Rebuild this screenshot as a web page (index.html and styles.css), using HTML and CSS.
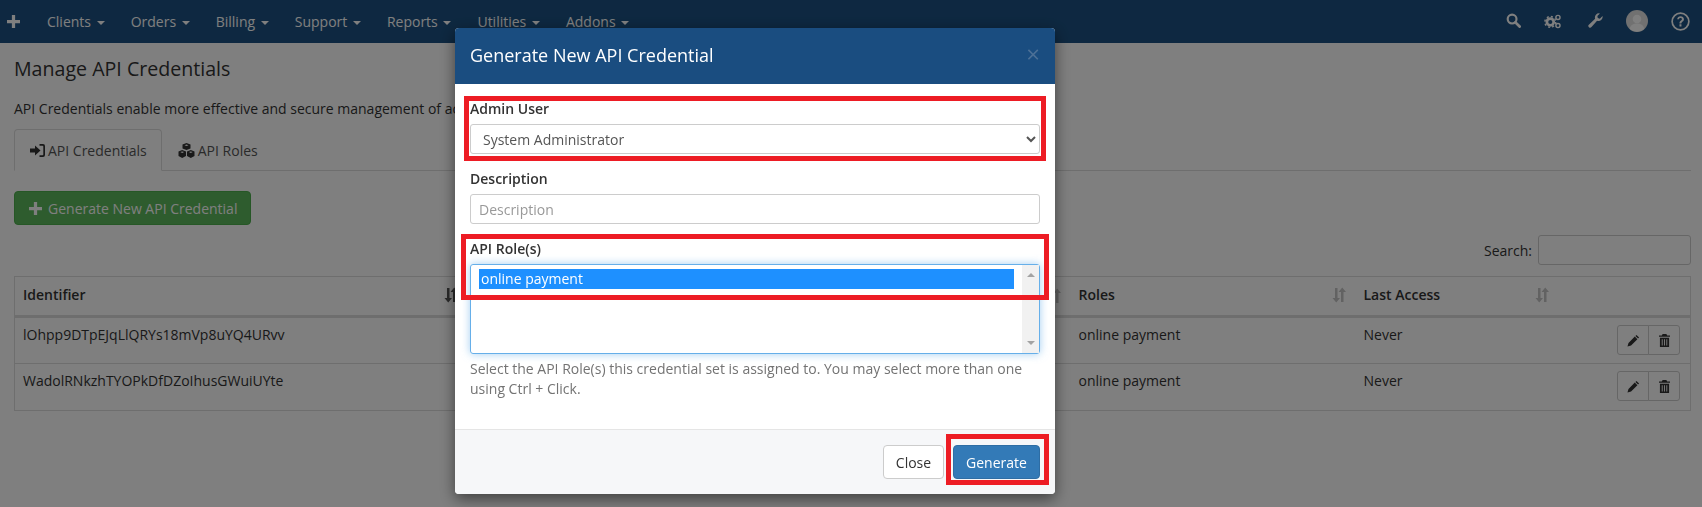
FILE: index.html
```html
<!DOCTYPE html>
<html lang="en">

<head>
    <meta charset="UTF-8">
    <title>Manage API Credentials</title>
    <link rel="stylesheet" href="styles.css">
</head>

<body>

    <svg class="icon-defs" width="0" height="0">
        <symbol id="i-plus" viewBox="0 0 12 12"><path d="M4.500 0h3v4.500H12v3H7.500V12h-3V7.500H0v-3h4.500z"/></symbol>
        <symbol id="i-sort" viewBox="0 0 16 16"><path d="M5 1h2.500v10H10l-3.750 4.500L2.500 11H5zM11 15h2.500V5H16L12.250.5 8.500 5H11z"/></symbol>
        <symbol id="i-pencil" viewBox="0 0 14 14"><path d="M10.200 1 13 3.800 11.900 4.900 9.100 2.100zM8.400 2.800l2.800 2.800-6.800 6.800-3.900 1.100 1.100-3.900z"/></symbol>
        <symbol id="i-trash" viewBox="0 0 12 14"><path d="M4 0h4l1 1.500h3V3H0V1.500h3zM1 4h10v10H1zm2 1.500v7h1v-7zm2.500 0v7h1v-7zm2.500 0v7h1v-7z" fill-rule="evenodd"/></symbol>
    </svg>

    <nav class="topnav">
        <svg class="nav-plus"><use href="#i-plus"/></svg>
        <ul class="nav-menu">
            <li>Clients <span class="caret"></span></li>
            <li>Orders <span class="caret"></span></li>
            <li>Billing <span class="caret"></span></li>
            <li>Support <span class="caret"></span></li>
            <li>Reports <span class="caret"></span></li>
            <li>Utilities <span class="caret"></span></li>
            <li>Addons <span class="caret"></span></li>
        </ul>
        <div class="nav-icons">
            <svg class="nav-search" width="15" height="15" viewBox="0 0 16 16"><circle cx="6.500" cy="6.500" r="4.700" fill="none" stroke="currentColor" stroke-width="2.300"/><path d="M10 10l4.500 4.500" stroke="currentColor" stroke-width="3" stroke-linecap="round"/></svg>
            <svg width="18" height="15" viewBox="0 0 20 16"><circle cx="7" cy="8.500" r="3.800" fill="none" stroke="currentColor" stroke-width="3"/><circle cx="7" cy="8.500" r="6" fill="none" stroke="currentColor" stroke-width="1.600" stroke-dasharray="2.300 2.400"/><circle cx="15.500" cy="3.500" r="2.300" fill="none" stroke="currentColor" stroke-width="1.600"/><circle cx="15.500" cy="12.500" r="2.300" fill="none" stroke="currentColor" stroke-width="1.600"/></svg>
            <svg class="nav-wrench" width="15" height="15" viewBox="0 0 16 16"><path d="M15.500 3.300a4.400 4.400 0 0 1-5.800 5L3.700 15a1.900 1.900 0 0 1-2.800-2.600l6.700-6.200a4.400 4.400 0 0 1 5.100-5.700L10 3.300l.4 2.100 2.200.6z"/></svg>
            <svg class="nav-avatar" width="22" height="22" viewBox="0 0 22 22"><circle cx="11" cy="11" r="11" fill="#e2e2e2"/><circle cx="11" cy="9" r="4.300" fill="#fff"/><path d="M3.800 19c.6-3.800 3.500-5.400 7.200-5.400s6.600 1.600 7.200 5.400a11 11 0 0 1-14.400 0z" fill="#fff"/></svg>
            <svg width="19" height="19" viewBox="0 0 20 20"><circle cx="10" cy="10" r="8.800" fill="none" stroke="currentColor" stroke-width="1.800"/><path d="M6.500 7.600C6.700 5.500 8.200 4.500 10 4.500c2 0 3.600 1.100 3.600 3 0 2.500-2.700 2.500-2.700 4.500H8.900c0-3.100 2.600-3.100 2.600-4.500 0-.8-.7-1.200-1.500-1.200-.9 0-1.500.5-1.600 1.400zM8.900 13H11v2.200H8.900z"/></svg>
        </div>
    </nav>

    <main class="content">
        <h1 class="page-title">Manage API Credentials</h1>
        <p class="page-intro">API Credentials enable more effective and secure management of access to the API.</p>

        <ul class="tabs">
            <li class="tab tab-active">
                <svg width="15" height="13" viewBox="0 0 15 13"><path d="M0 4.500h5V1.500L10.500 6.500 5 11.500v-3H0z"/><path d="M9.500 0H13a2 2 0 0 1 2 2v9a2 2 0 0 1-2 2H9.500v-1.800H12.500a.8.8 0 0 0 .8-.8V2.600a.8.8 0 0 0-.8-.8H9.500z"/></svg>
                API Credentials
            </li>
            <li class="tab">
                <svg width="17" height="15" viewBox="0 0 17 15"><path d="M8.500 0 12.500 1.600V5.400L8.500 7 4.500 5.400V1.600zM8.500 1.500 6.500 2.300 8.500 3.100 10.500 2.300zM4.200 7 8 8.500V13L4.200 15 .5 13V8.500zM4.200 8.400 2.300 9.100 4.200 9.900 6.100 9.100zM12.800 7 16.500 8.500V13L12.800 15 9 13V8.500zM12.800 8.400 10.900 9.100 12.800 9.900 14.700 9.100z" fill-rule="evenodd"/></svg>
                API Roles
            </li>
        </ul>

        <button type="button" class="btn-new">
            <svg width="13" height="13"><use href="#i-plus"/></svg>
            Generate New API Credential
        </button>

        <div class="search-row">
            <label for="table-search">Search:</label>
            <input type="text" id="table-search">
        </div>

        <table class="cred-table">
            <thead>
                <tr>
                    <th class="col-id">Identifier <svg class="sort"><use href="#i-sort"/></svg></th>
                    <th class="col-desc"><svg class="sort"><use href="#i-sort"/></svg></th>
                    <th class="col-admin"><svg class="sort"><use href="#i-sort"/></svg></th>
                    <th class="col-roles">Roles <svg class="sort"><use href="#i-sort"/></svg></th>
                    <th class="col-last">Last Access <svg class="sort"><use href="#i-sort"/></svg></th>
                    <th class="col-actions"></th>
                </tr>
            </thead>
            <tbody>
                <tr>
                    <td>lOhpp9DTpEJqLlQRYs18mVp8uYQ4URvv</td>
                    <td></td>
                    <td></td>
                    <td>online payment</td>
                    <td>Never</td>
                    <td class="cell-actions">
                        <div class="btn-group">
                            <button type="button"><svg width="13" height="13"><use href="#i-pencil"/></svg></button>
                            <button type="button"><svg width="11" height="13"><use href="#i-trash"/></svg></button>
                        </div>
                    </td>
                </tr>
                <tr>
                    <td>WadolRNkzhTYOPkDfDZoIhusGWuiUYte</td>
                    <td></td>
                    <td></td>
                    <td>online payment</td>
                    <td>Never</td>
                    <td class="cell-actions">
                        <div class="btn-group">
                            <button type="button"><svg width="13" height="13"><use href="#i-pencil"/></svg></button>
                            <button type="button"><svg width="11" height="13"><use href="#i-trash"/></svg></button>
                        </div>
                    </td>
                </tr>
            </tbody>
        </table>
    </main>

    <div class="backdrop">
        <div class="modal">
            <div class="modal-header">
                <h2>Generate New API Credential</h2>
                <span class="modal-close">&times;</span>
            </div>
            <form class="modal-body">
                <div class="form-group">
                    <label for="admin-user">Admin User</label>
                    <select id="admin-user">
                        <option>System Administrator</option>
                    </select>
                </div>
                <div class="form-group">
                    <label for="description">Description</label>
                    <input type="text" id="description" placeholder="Description">
                </div>
                <div class="form-group">
                    <label>API Role(s)</label>
                    <div class="role-list">
                        <div class="role-options">
                            <div class="role-option">online payment</div>
                        </div>
                        <div class="role-scroll">
                            <span class="arrow-up"></span>
                            <span class="arrow-down"></span>
                        </div>
                    </div>
                    <p class="help-text">Select the API Role(s) this credential set is assigned to. You may select more than one using Ctrl + Click.</p>
                </div>
            </form>
            <div class="modal-footer">
                <button type="button" class="btn-close">Close</button>
                <button type="button" class="btn-generate">Generate</button>
            </div>

            <div class="mark mark-admin"></div>
            <div class="mark mark-roles"></div>
            <div class="mark mark-generate"></div>
        </div>
    </div>

</body>

</html>
```

FILE: styles.css
```css
* {
    box-sizing: border-box;
}

html, body {
    height: 100%;
}

body {
    margin: 0;
    overflow: hidden;
    font-family: "Open Sans", sans-serif;
    font-size: 14px;
    color: #333;
    background-color: #fff;
}

svg {
    fill: currentColor;
}

.icon-defs {
    display: none;
}

.topnav {
    display: flex;
    align-items: center;
    height: 43px;
    background-color: #1c5182;
    color: #fff;
}

.nav-plus {
    width: 13px;
    height: 13px;
    margin-left: 7px;
}

.nav-menu {
    display: flex;
    margin: 0 0 0 27px;
    padding: 0;
    list-style: none;
}

.nav-menu li {
    margin-right: 26px;
}

.caret {
    display: inline-block;
    margin-left: 2px;
    vertical-align: middle;
    border-top: 4px solid #fff;
    border-left: 4px solid transparent;
    border-right: 4px solid transparent;
}

.nav-icons {
    display: flex;
    align-items: center;
    gap: 23px;
    margin-left: auto;
    margin-right: 12px;
}

.nav-search,
.nav-avatar {
    margin-top: -2px;
}

.nav-wrench {
    margin-left: 3px;
    margin-top: -2px;
}

.content {
    padding: 0 11px 0 14px;
}

.page-title {
    margin: 13px 0 0;
    font-size: 19.6px;
    font-weight: 400;
    line-height: 25px;
}

.page-intro {
    margin: 18px 0 0;
    line-height: 20px;
}

.tabs {
    display: flex;
    height: 42px;
    margin: 10px 0 0;
    padding: 0;
    list-style: none;
    border-bottom: 1px solid #ddd;
}

.tab {
    display: flex;
    align-items: center;
    gap: 3px;
    height: 42px;
    padding: 0 15px;
    border: 1px solid transparent;
    border-radius: 4px 4px 0 0;
    color: #555;
}

.tab-active {
    padding-right: 14px;
    background-color: #fff;
    border-color: #ddd;
    border-bottom-color: #fff;
}

.tab svg {
    color: #333;
}

.btn-new {
    display: flex;
    align-items: center;
    gap: 6px;
    height: 34px;
    margin-top: 20px;
    padding: 0 13px 0 14px;
    font: inherit;
    color: #fff;
    background-color: #5cb85c;
    border: 1px solid #4cae4c;
    border-radius: 4px;
}

.search-row {
    display: flex;
    justify-content: flex-end;
    align-items: center;
    gap: 6px;
    margin-top: 10px;
}

.search-row input {
    width: 153px;
    height: 30px;
    border: 1px solid #ccc;
    border-radius: 3px;
}

.cred-table {
    width: 100%;
    margin-top: 11px;
    border-collapse: collapse;
    table-layout: fixed;
    border: 1px solid #ddd;
}

.cred-table th {
    height: 40px;
    padding: 0 8px 3px;
    text-align: left;
    font-weight: 600;
    border-bottom: 3px solid #ddd;
}

.cred-table td {
    height: 47px;
    padding: 7px 8px 0;
    vertical-align: top;
    border-top: 1px solid #ddd;
}

.col-id { width: 453px; }
.col-desc { width: 297px; }
.col-admin { width: 306px; }
.col-roles { width: 285px; }
.col-last { width: 203px; }

.sort {
    float: right;
    width: 16px;
    height: 16px;
    margin-top: 2px;
    margin-right: 2px;
    color: #c4c4c4;
}

.col-id .sort {
    color: #555;
}

.cred-table td.cell-actions {
    padding: 7px 10px 0 0;
}

.btn-group {
    display: flex;
    justify-content: flex-end;
}

.btn-group button {
    display: flex;
    align-items: center;
    justify-content: center;
    width: 32px;
    height: 30px;
    padding: 0;
    color: #333;
    background-color: #fff;
    border: 1px solid #ccc;
}

.btn-group button:first-child {
    border-radius: 3px 0 0 3px;
}

.btn-group button:last-child {
    margin-left: -1px;
    border-radius: 0 3px 3px 0;
}

.backdrop {
    position: fixed;
    inset: 0;
    background-color: rgba(0, 0, 0, 0.5);
}

.modal {
    position: relative;
    width: 600px;
    margin: 28px 0 0 455px;
    background-color: #fff;
    border-radius: 4px;
    box-shadow: 0 5px 15px rgba(0, 0, 0, 0.5);
}

.modal-header {
    display: flex;
    justify-content: space-between;
    align-items: center;
    height: 56px;
    padding: 0 15px;
    background-color: #1a4d80;
    border-radius: 4px 4px 0 0;
}

.modal-header h2 {
    margin: -2px 0 0;
    font-size: 18px;
    font-weight: 500;
    color: #fff;
}

.modal-close {
    margin-top: -6px;
    font-size: 24px;
    font-weight: 400;
    color: #4c7096;
}

.modal-body {
    height: 345px;
    padding: 15px;
}

.form-group {
    margin-bottom: 15px;
}

.form-group label {
    display: block;
    height: 20px;
    margin-bottom: 5px;
    font-weight: 600;
}

.form-group select,
.form-group input {
    display: block;
    width: 100%;
    height: 30px;
    padding: 0 8px;
    font: inherit;
    color: #555;
    background-color: #fff;
    border: 1px solid #ccc;
    border-radius: 3px;
}

.form-group input::placeholder {
    color: #999;
}

.role-list {
    display: flex;
    height: 90px;
    border: 1px solid #66afe9;
    border-radius: 3px;
    box-shadow: 0 0 8px rgba(102, 175, 233, 0.6);
}

.role-options {
    flex: 1;
    padding: 4px 8px 0;
}

.role-option {
    height: 20px;
    padding-left: 2px;
    line-height: 20px;
    color: #fff;
    background-color: #1e90ff;
}

.role-scroll {
    position: relative;
    width: 17px;
    background-color: #f1f1f1;
}

.arrow-up,
.arrow-down {
    position: absolute;
    left: 5px;
    border-left: 4px solid transparent;
    border-right: 4px solid transparent;
}

.arrow-up {
    top: 8px;
    border-bottom: 4px solid #a3a3a3;
}

.arrow-down {
    bottom: 8px;
    border-top: 4px solid #a3a3a3;
}

.help-text {
    margin: 5px 0 0;
    line-height: 20px;
    color: #737373;
}

.modal-footer {
    display: flex;
    justify-content: flex-end;
    align-items: center;
    gap: 9px;
    height: 65px;
    padding: 0 15px;
    background-color: #f6f7f9;
    border-top: 1px solid #e5e5e5;
    border-radius: 0 0 4px 4px;
}

.btn-close,
.btn-generate {
    height: 34px;
    font: inherit;
    border-radius: 4px;
}

.btn-close {
    width: 61px;
    color: #333;
    background-color: #fff;
    border: 1px solid #ccc;
}

.btn-generate {
    width: 87px;
    color: #fff;
    background-color: #337ab7;
    border: 1px solid #2e6da4;
}

/* red highlight boxes drawn on top of the dialog */
.mark {
    position: absolute;
    border: 5px solid #ed1c24;
}

.mark-admin {
    left: 9px;
    top: 68px;
    width: 582px;
    height: 65px;
}

.mark-roles {
    left: 6px;
    top: 206px;
    width: 588px;
    height: 66px;
}

.mark-generate {
    left: 491px;
    top: 406px;
    width: 103px;
    height: 51px;
}
```
